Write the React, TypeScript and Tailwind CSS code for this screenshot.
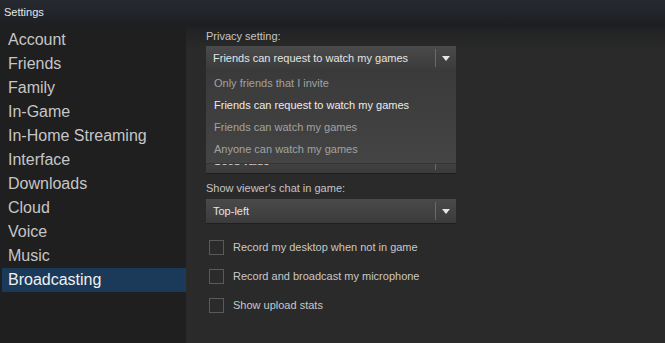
const navItems = [
  "Account",
  "Friends",
  "Family",
  "In-Game",
  "In-Home Streaming",
  "Interface",
  "Downloads",
  "Cloud",
  "Voice",
  "Music",
  "Broadcasting",
];

const privacyOptions = [
  "Only friends that I invite",
  "Friends can request to watch my games",
  "Friends can watch my games",
  "Anyone can watch my games",
];

function Arrow() {
  return (
    <svg width="8" height="5" viewBox="0 0 8 5" className="block">
      <path d="M0 0 H8 L4 5 Z" fill="#e6e6e6" />
    </svg>
  );
}

function Dropdown({ value }: { value: string }) {
  return (
    <div className="flex h-[24px] w-[250px] items-center bg-gradient-to-b from-[#4a4a4a] to-[#3b3b3b] shadow-[0_1px_0_#1f1f1f]">
      <span className="flex-1 truncate pl-[7px] text-[11px] text-[#e4e4e4]">{value}</span>
      <div className="h-[18px] w-px bg-[#6a6a6a]" />
      <div className="flex w-[20px] justify-center">
        <Arrow />
      </div>
    </div>
  );
}

function Label({ text }: { text: string }) {
  return <div className="h-[14px] text-[11px] leading-[14px] text-[#c4c4c4]">{text}</div>;
}

function Checkbox({ label }: { label: string }) {
  return (
    <div className="flex h-[29px] items-center">
      <div className="ml-[3px] h-[15px] w-[15px] border border-[#5a5a5a] bg-[#2b2b2b]" />
      <span className="ml-[9px] text-[11px] text-[#c8c8c8]">{label}</span>
    </div>
  );
}

export default function App() {
  return (
    <div
      className="flex h-[343px] w-[665px] flex-col overflow-hidden bg-[#2a2a2a] text-white"
      style={{ fontFamily: '"Liberation Sans", Arial, sans-serif' }}
    >
      <div className="h-[27px] shrink-0 bg-gradient-to-b from-[#262a30] to-[#1d1e21] pl-[4px] pt-[4px] text-[11px] text-[#e8e8e8]">
        Settings
      </div>
      <div className="flex flex-1">
        <div className="flex w-[186px] shrink-0 bg-[#1e1f22] pl-[2px]">
          <div className="flex-1 bg-[#1f1f1f] pt-[1px]">
            {navItems.map((item) => (
              <div
                key={item}
                className={
                  item === "Broadcasting"
                    ? "flex h-[24px] items-center bg-[#1b3959] pl-[6px] text-[16px] text-[#f0f0f0]"
                    : "flex h-[24px] items-center pl-[6px] text-[16px] text-[#c6c6c6]"
                }
              >
                {item}
              </div>
            ))}
          </div>
        </div>
        <div className="flex-1 bg-gradient-to-b from-[#202123] to-[#2a2a2a] to-[22px] pl-[20px] pt-[2px]">
          <div className="relative w-[250px]">
            <Label text="Privacy setting:" />
            <div className="mt-[3px]">
              <Dropdown value="Friends can request to watch my games" />
            </div>
            {/* rows hidden under the open menu */}
            <div className="mt-[10px] h-[14px]" />
            <div className="mt-[4px] h-[24px]" />
            <div className="mt-[9px] h-[14px]" />
            <div className="mt-[4px]">
              <Dropdown value="Good value" />
            </div>
            <div className="mt-[8px]">
              <Label text="Show viewer's chat in game:" />
            </div>
            <div className="mt-[4px]">
              <Dropdown value="Top-left" />
            </div>
            <div className="mt-[10px]">
              <Checkbox label="Record my desktop when not in game" />
              <Checkbox label="Record and broadcast my microphone" />
              <Checkbox label="Show upload stats" />
            </div>

            <div className="absolute left-0 top-[41px] w-[250px] bg-gradient-to-b from-[#3a3a3a] to-[#444444] pt-[2px] pb-[3px] shadow-[0_1px_0_#353535]">
              {privacyOptions.map((opt, i) => (
                <div
                  key={opt}
                  className={
                    i === 1
                      ? "flex h-[22px] items-center pl-[8px] text-[11px] text-[#ececec]"
                      : "flex h-[22px] items-center pl-[8px] text-[11px] text-[#a2a2a2]"
                  }
                >
                  {opt}
                </div>
              ))}
            </div>
          </div>
        </div>
      </div>
    </div>
  );
}
